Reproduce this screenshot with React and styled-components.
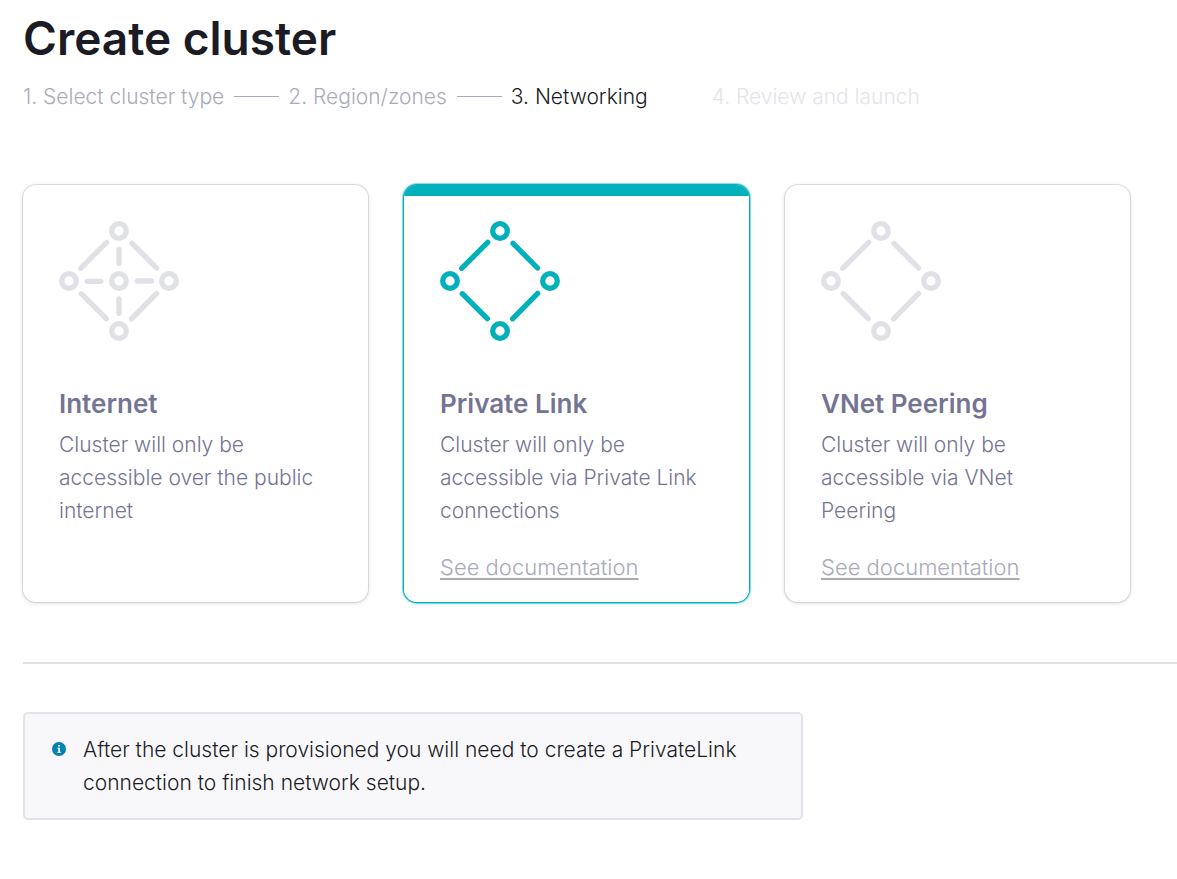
import React, { useState } from "react";
import styled, { createGlobalStyle } from "styled-components";

const GlobalStyle = createGlobalStyle`
  *, *::before, *::after { box-sizing: border-box; }
  body {
    margin: 0;
    background: #fff;
    color: #1a1b25;
    font-family: Inter, "Liberation Sans", sans-serif;
    font-size: 21px;
    font-weight: 300;
    line-height: 33px;
  }
`;

const Page = styled.main`
  padding: 8px 0 60px 23px;
`;

const Title = styled.h1`
  margin: 0;
  font-size: 46px;
  line-height: 60px;
  font-weight: 600;
`;

const Steps = styled.ol`
  display: flex;
  flex-wrap: wrap;
  margin: 12px 0 0;
  padding: 0;
  list-style: none;
`;

const stepColors = { done: "#aaaabd", current: "#1a1b25", next: "#e4e4ea" };

const Step = styled.li`
  display: flex;
  align-items: center;
  white-space: nowrap;
  color: ${(p) => stepColors[p.$state]};

  &:not(:first-child)::before {
    content: "";
    width: 45px;
    height: 1px;
    margin: 0 9px 0 10px;
    background: ${(p) => (p.$state === "next" ? "transparent" : "#a9a9bc")};
  }
`;

const Cards = styled.div`
  display: grid;
  grid-template-columns: repeat(3, minmax(0, 345px));
  gap: 36px;
  margin-top: 72px;
`;

const Card = styled.div`
  position: relative;
  display: flex;
  flex-direction: column;
  align-items: flex-start;
  min-height: 417px;
  padding: 36px 36px 18px;
  border-radius: 13px;
  color: #747494;
  background: ${(p) =>
    p.$selected ? "linear-gradient(#00b0bb 11px, #fff 11px)" : "#fff"};
  box-shadow: ${(p) =>
    p.$selected
      ? "0 0 0 1px #00b0bb, 0 0 0 2px rgba(0, 176, 187, 0.4), 0 1px 5px rgba(0, 176, 187, 0.3)"
      : "0 0 0 1px rgba(0, 0, 0, 0.1), 0 1px 5px rgba(0, 0, 0, 0.14)"};
`;

const CardRadio = styled.input`
  position: absolute;
  inset: 0;
  width: 100%;
  height: 100%;
  margin: 0;
  opacity: 0;
  cursor: pointer;
`;

const Diagram = styled.svg`
  width: 120px;
  height: 120px;
  color: ${(p) => (p.$selected ? "#00b0bb" : "#e0e0e7")};
`;

const CardTitle = styled.label`
  margin-top: 45px;
  font-size: 26px;
  line-height: 36px;
  font-weight: 600;
`;

const CardText = styled.p`
  margin: 6px 0 0;
  padding-right: 12px;
`;

const DocLink = styled.a`
  position: relative;
  margin-top: 24px;
  color: #a9a9bc;
  font-size: 22px;
  text-decoration: underline;
  text-decoration-thickness: 2px;
  text-underline-offset: 3px;
  text-decoration-skip-ink: none;
`;

const Divider = styled.hr`
  height: 2px;
  margin: 60px 0 0;
  border: 0;
  background: #e0e0e7;
`;

const Notice = styled.aside`
  display: flex;
  gap: 17px;
  max-width: 780px;
  margin: 48px 23px 0 0;
  padding: 19px 27px;
  border: 2px solid #e3e3e9;
  border-radius: 5px;
  background: #f8f8fb;
`;

const NoticeIcon = styled.svg`
  flex: none;
  width: 14px;
  height: 33px;
`;

const NoticeText = styled.p`
  margin: 0;
`;

function NetworkDiagram({ selected, hub }) {
  const nodes = [[60, 10], [10, 60], [110, 60], [60, 110]];
  if (hub) nodes.push([60, 60]);
  return (
    <Diagram
      viewBox="0 0 120 120"
      fill="none"
      stroke="currentColor"
      strokeWidth="5.3"
      strokeLinecap="round"
      $selected={selected}
      aria-hidden="true"
    >
      {nodes.map(([x, y]) => (
        <circle key={`${x}-${y}`} cx={x} cy={y} r="7.3" />
      ))}
      <path d="M21.7 47.3 47.7 21.3M73 22.3 97.5 47M22.3 72.7 47.3 97.7M97.7 72.3 72.5 97.8" />
      {hub && <path d="M60 28.3V42.3M60 78V92.3M28.3 60.3H42M78.3 60H92.3" />}
    </Diagram>
  );
}

const steps = [
  { label: "1. Select cluster type", state: "done" },
  { label: "2. Region/zones", state: "done" },
  { label: "3. Networking", state: "current" },
  { label: "4. Review and launch", state: "next" },
];

const options = [
  {
    id: "internet",
    title: "Internet",
    text: "Cluster will only be accessible over the public internet",
    hub: true,
  },
  {
    id: "private-link",
    title: "Private Link",
    text: "Cluster will only be accessible via Private Link connections",
    docs: true,
  },
  {
    id: "vnet-peering",
    title: "VNet Peering",
    text: "Cluster will only be accessible via VNet Peering",
    docs: true,
  },
];

export default function App() {
  const [selected, setSelected] = useState("private-link");

  return (
    <>
      <GlobalStyle />
      <Page>
        <Title>Create cluster</Title>
        <Steps>
          {steps.map((s) => (
            <Step
              key={s.label}
              $state={s.state}
              aria-current={s.state === "current" ? "step" : undefined}
            >
              {s.label}
            </Step>
          ))}
        </Steps>
        <Cards role="radiogroup" aria-label="Networking">
          {options.map((o) => {
            const active = o.id === selected;
            return (
              <Card key={o.id} $selected={active}>
                <NetworkDiagram selected={active} hub={o.hub} />
                <CardTitle htmlFor={o.id}>{o.title}</CardTitle>
                <CardText>{o.text}</CardText>
                <CardRadio
                  type="radio"
                  name="networking"
                  id={o.id}
                  checked={active}
                  onChange={() => setSelected(o.id)}
                />
                {o.docs && <DocLink href="#documentation">See documentation</DocLink>}
              </Card>
            );
          })}
        </Cards>
        <Divider />
        <Notice>
          <NoticeIcon viewBox="0 0 14 33" aria-hidden="true">
            <circle cx="7" cy="16" r="7" fill="#0081b4" />
            <path
              d="M6 12H8V13.6H6ZM5.5 14.8H8V18.8H8.8V20H5.4V18.8H6.3V16H5.5Z"
              fill="#fff"
            />
          </NoticeIcon>
          <NoticeText>
            After the cluster is provisioned you will need to create a PrivateLink
            connection to finish network setup.
          </NoticeText>
        </Notice>
      </Page>
    </>
  );
}
